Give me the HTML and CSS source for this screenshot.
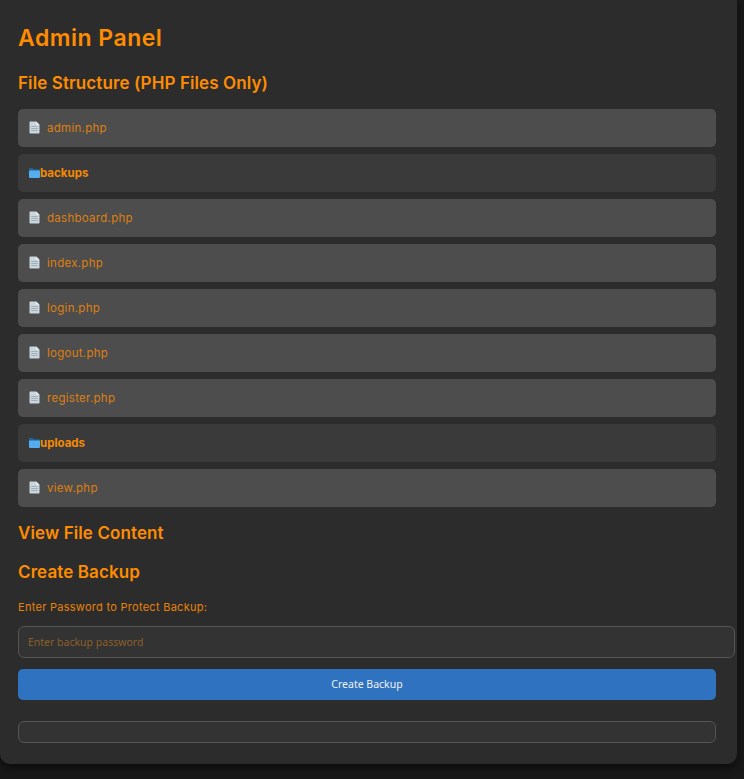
FILE: index.html
```html
<!DOCTYPE html>
<html lang="en">
<head>
  <meta charset="UTF-8">
  <title>Admin Panel</title>
  <link rel="stylesheet" href="styles.css">
</head>
<body>

  <div class="container">
    <h1>Admin Panel</h1>

    <h2 class="first-title">File Structure (PHP Files Only)</h2>

    <ul class="file-list">
      <li class="file"><svg class="page-icon" viewBox="0 0 11 13"><path d="M0.5 1.2a.7.7 0 0 1 .7-.7h6l3.3 3.3v8a.7.7 0 0 1-.7.7H1.2a.7.7 0 0 1-.7-.7z" fill="#ccd6dd"/><path d="M7.2 .5l3.3 3.3H7.9a.7.7 0 0 1-.7-.7z" fill="#e9eff3"/><path d="M2.2 5.5h6.6M2.2 7.5h6.6M2.2 9.5h6.6" stroke="#99aab5" stroke-width=".9"/></svg><a href="#">admin.php</a></li>
      <li class="folder"><svg class="folder-icon" viewBox="0 0 11 10"><path d="M0 1a1 1 0 0 1 1-1h2.6l1.2 1.3H10a1 1 0 0 1 1 1V5H0z" fill="#226699"/><path d="M0 3.4a.8.8 0 0 1 .8-.8h9.4a.8.8 0 0 1 .8.8V9a1 1 0 0 1-1 1H1a1 1 0 0 1-1-1z" fill="#55acee"/></svg>backups</li>
      <li class="file"><svg class="page-icon" viewBox="0 0 11 13"><path d="M0.5 1.2a.7.7 0 0 1 .7-.7h6l3.3 3.3v8a.7.7 0 0 1-.7.7H1.2a.7.7 0 0 1-.7-.7z" fill="#ccd6dd"/><path d="M7.2 .5l3.3 3.3H7.9a.7.7 0 0 1-.7-.7z" fill="#e9eff3"/><path d="M2.2 5.5h6.6M2.2 7.5h6.6M2.2 9.5h6.6" stroke="#99aab5" stroke-width=".9"/></svg><a href="#">dashboard.php</a></li>
      <li class="file"><svg class="page-icon" viewBox="0 0 11 13"><path d="M0.5 1.2a.7.7 0 0 1 .7-.7h6l3.3 3.3v8a.7.7 0 0 1-.7.7H1.2a.7.7 0 0 1-.7-.7z" fill="#ccd6dd"/><path d="M7.2 .5l3.3 3.3H7.9a.7.7 0 0 1-.7-.7z" fill="#e9eff3"/><path d="M2.2 5.5h6.6M2.2 7.5h6.6M2.2 9.5h6.6" stroke="#99aab5" stroke-width=".9"/></svg><a href="#">index.php</a></li>
      <li class="file"><svg class="page-icon" viewBox="0 0 11 13"><path d="M0.5 1.2a.7.7 0 0 1 .7-.7h6l3.3 3.3v8a.7.7 0 0 1-.7.7H1.2a.7.7 0 0 1-.7-.7z" fill="#ccd6dd"/><path d="M7.2 .5l3.3 3.3H7.9a.7.7 0 0 1-.7-.7z" fill="#e9eff3"/><path d="M2.2 5.5h6.6M2.2 7.5h6.6M2.2 9.5h6.6" stroke="#99aab5" stroke-width=".9"/></svg><a href="#">login.php</a></li>
      <li class="file"><svg class="page-icon" viewBox="0 0 11 13"><path d="M0.5 1.2a.7.7 0 0 1 .7-.7h6l3.3 3.3v8a.7.7 0 0 1-.7.7H1.2a.7.7 0 0 1-.7-.7z" fill="#ccd6dd"/><path d="M7.2 .5l3.3 3.3H7.9a.7.7 0 0 1-.7-.7z" fill="#e9eff3"/><path d="M2.2 5.5h6.6M2.2 7.5h6.6M2.2 9.5h6.6" stroke="#99aab5" stroke-width=".9"/></svg><a href="#">logout.php</a></li>
      <li class="file"><svg class="page-icon" viewBox="0 0 11 13"><path d="M0.5 1.2a.7.7 0 0 1 .7-.7h6l3.3 3.3v8a.7.7 0 0 1-.7.7H1.2a.7.7 0 0 1-.7-.7z" fill="#ccd6dd"/><path d="M7.2 .5l3.3 3.3H7.9a.7.7 0 0 1-.7-.7z" fill="#e9eff3"/><path d="M2.2 5.5h6.6M2.2 7.5h6.6M2.2 9.5h6.6" stroke="#99aab5" stroke-width=".9"/></svg><a href="#">register.php</a></li>
      <li class="folder"><svg class="folder-icon" viewBox="0 0 11 10"><path d="M0 1a1 1 0 0 1 1-1h2.6l1.2 1.3H10a1 1 0 0 1 1 1V5H0z" fill="#226699"/><path d="M0 3.4a.8.8 0 0 1 .8-.8h9.4a.8.8 0 0 1 .8.8V9a1 1 0 0 1-1 1H1a1 1 0 0 1-1-1z" fill="#55acee"/></svg>uploads</li>
      <li class="file"><svg class="page-icon" viewBox="0 0 11 13"><path d="M0.5 1.2a.7.7 0 0 1 .7-.7h6l3.3 3.3v8a.7.7 0 0 1-.7.7H1.2a.7.7 0 0 1-.7-.7z" fill="#ccd6dd"/><path d="M7.2 .5l3.3 3.3H7.9a.7.7 0 0 1-.7-.7z" fill="#e9eff3"/><path d="M2.2 5.5h6.6M2.2 7.5h6.6M2.2 9.5h6.6" stroke="#99aab5" stroke-width=".9"/></svg><a href="#">view.php</a></li>
    </ul>

    <h2>View File Content</h2>

    <h2>Create Backup</h2>

    <label for="backupPassword">Enter Password to Protect Backup:</label>
    <input type="password" id="backupPassword" placeholder="Enter backup password">
    <button type="button">Create Backup</button>

    <div class="output-box"></div>
  </div>

</body>
</html>
```

FILE: styles.css
```css
body {
  margin: 0;
  height: 779px;
  overflow: hidden;
  background-color: #181818;
  font-family: Inter, "Liberation Sans", sans-serif;
  color: #ff8c00;
}

.container {
  box-sizing: border-box;
  width: 737px;
  height: 764px;
  padding: 20px 21px 0 18px;
  background-color: #2c2c2c;
  border-radius: 0 0 10px 10px;
  box-shadow: 0 4px 10px rgba(0,0,0,0.5);
}

h1 {
  margin: 0;
  font-size: 23px;
  line-height: 36px;
  font-weight: 600;
  letter-spacing: 0.5px;
}

h2 {
  margin: 0 0 15px;
  font-size: 17px;
  line-height: 24px;
  font-weight: 600;
  letter-spacing: 0.1px;
}

.first-title {
  margin-top: 15px;
  margin-bottom: 14px;
}

.file-list {
  list-style: none;
  margin: 0 0 14px;
  padding: 0;
  display: flex;
  flex-direction: column;
  gap: 7px;
}

.file, .folder {
  display: flex;
  align-items: center;
  height: 38px;
  padding-left: 11px;
  border-radius: 5px;
  font-size: 11.5px;
  letter-spacing: 0.28px;
}

.file {
  background-color: #4d4d4d;
}

.folder {
  background-color: #3a3a3a;
  font-weight: 700;
  letter-spacing: 0;
  color: #f58a05;
}

.file a {
  color: #dd7f10;
  text-decoration: none;
}

.page-icon {
  width: 11px;
  height: 13px;
  margin-right: 7px;
  margin-bottom: 1px;
}

.folder-icon {
  width: 11px;
  height: 10px;
}

label {
  display: block;
  margin-top: 15px;
  font-size: 11px;
  line-height: 17px;
  letter-spacing: 0.28px;
  color: #e8820a;
}

input[type="password"] {
  display: block;
  box-sizing: border-box;
  width: 717px;
  height: 32px;
  margin-top: 10px;
  padding: 0 9px;
  background-color: #333;
  border: 1px solid #555;
  border-radius: 6px;
  font-family: "Noto Sans", sans-serif;
  font-size: 10.5px;
  color: #ff8c00;
}

input::placeholder {
  color: #8c5f2a;
}

button {
  display: block;
  width: 698px;
  height: 31px;
  margin-top: 11px;
  padding: 0 0 2px;
  background-color: #2e72c0;
  border: none;
  border-radius: 5px;
  font-family: "Noto Sans", sans-serif;
  font-size: 10.5px;
  color: #f0f0f0;
}

.output-box {
  box-sizing: border-box;
  width: 698px;
  height: 22px;
  margin-top: 21px;
  background-color: #333;
  border: 1px solid #555;
  border-radius: 6px;
}
```
